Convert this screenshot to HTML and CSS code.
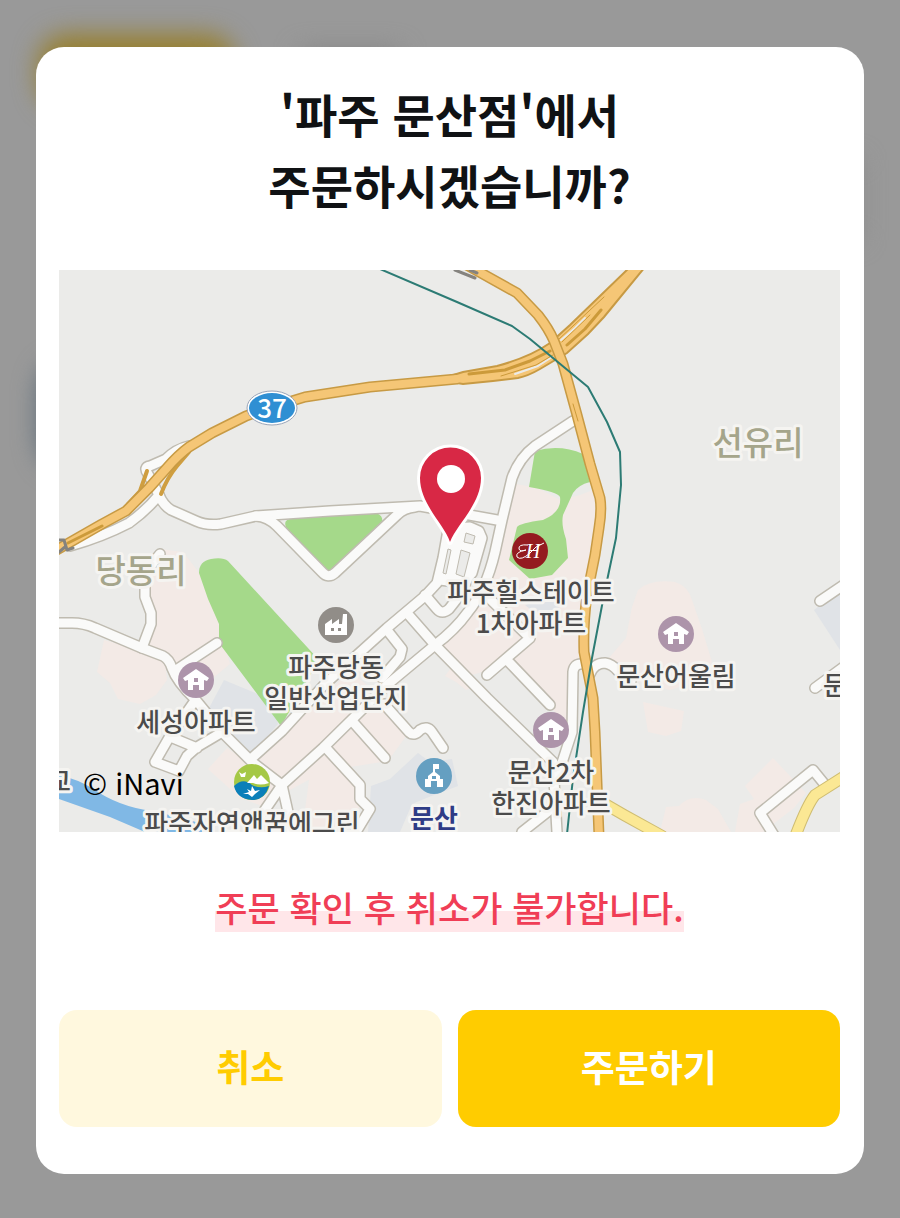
FILE: index.html
```html
<!DOCTYPE html>
<html lang="ko">
<head>
    <meta charset="UTF-8">
    <meta name="viewport" content="width=device-width, initial-scale=1.0">
    <title>주문 매장 확인</title>
    <link rel="stylesheet" href="styles.css">
</head>
<body>
    <div class="backdrop" aria-hidden="true">
        <div class="blob blob-yellow"></div>
        <div class="blob blob-gray"></div>
        <div class="blob blob-blue"></div>
        <div class="blob blob-side"></div>
    </div>

    <div class="overlay">
        <div class="modal" role="dialog" aria-modal="true" aria-labelledby="modalTitle">
            <h1 id="modalTitle" class="modal-title">'파주 문산점'에서<br>주문하시겠습니까?</h1>

            <svg class="map" viewBox="59 270 781 562" role="img" aria-label="파주 문산점 지도">
                <defs>
                    <g id="roads">
                        <!-- west -->
                        <path d="M70 546Q102 537 129 523Q147 510 159 495L148 474Q143 467 150 466L166 459Q176 449 189 446"/>
                        <path d="M159 495Q163 505 171 510L196 521Q207 526 221 524L256 516L330 511L420 506L497 520"/>
                        <path d="M256 516Q268 517 277 526L322 572Q328 579 335 573L397 515Q404 508 415 507"/>
                        <path d="M59 623H72Q84 623 95 628L142 648L163 656Q169 659 172 668Q177 682 195 699L222 732L252 762L282 785L288 812V832"/>
                        <path d="M282 785L260 817L250 832"/>
                        <path d="M160 554Q145 572 145 580V597L151 613V624L142 648"/>
                        <path d="M176 670L217 643"/>
                        <path d="M194 702L170 736L155 762L179 771L187 756L197 747L224 731M173 738L197 748"/>
                        <!-- centre -->
                        <path d="M573 421L535 446Q519 458 512 478L502 520L495 552Q486 590 468 612Q455 630 435 645L387 685L323 748L282 785"/>
                        <path d="M448 530L443 558L437 583L425 596L387 628L325 684L282 731L252 758"/>
                        <path d="M407 613L435 645L487 698L553 762L557 832"/>
                        <path d="M387 630L402 649L400 657L382 678"/>
                        <path d="M425 595L437 609Q442 615 449 609L460 595L468 578"/>
                        <path class="yard" d="M452 528L470 527L479 531L482 538L472 573L463 583L440 580L446 555Z"/>
                        <path d="M490 599L530 638L487 675M507 660L550 705"/>
                        <path d="M384 704L409 732Q414 737 420 730Q427 725 432 732L443 748"/>
                        <path d="M353 722L385 758"/>
                        <path d="M326 748L360 785V799L370 809L356 832"/>
                        <path d="M581 664Q574 664 573 672L572 732L558 775"/>
                        <path d="M590 674Q594 663 605 663Q612 664 618 671L631 681"/>
                        <path d="M555 806L522 832"/>
                        <!-- east -->
                        <path d="M820 601L845 584M815 688L845 666"/>
                        <path d="M775 837L760 813L813 770L826 786"/>
                    </g>
                    <path id="road37" d="M55 551L102 524L126 511L149 488L166 469Q178 455 189 447L212 433L246 416L272 407L305 397L370 387L457 379"/>
                    <path id="roadNorth" d="M465 264L517 293L538 315Q549 329 554 341L563 364L577 415L590 464L600 498Q602 510 599 528L595 555L587 595Q583 625 584 652L593 698L595 732L599 836"/>
                    <g id="lanes">
                        <path d="M605 804L624 815L662 836M845 776L815 795Q807 805 795 837"/>
                    </g>
                    <g id="home">
                        <circle class="home-dot" r="18"/>
                        <path class="glyph" fill-rule="evenodd" d="M0-11L13-2L11 1L8 0V10H3V5H-3V10H-8V0L-11 1L-13-2ZM-2-2V2H2V-2Z"/>
                    </g>
                </defs>

                <rect class="land" x="59" y="270" width="781" height="562"/>

                <!-- estates -->
                <g class="estate">
                    <path d="M160 549L183 552L201 575L219 622L226 650L230 664L212 679L180 690L168 658L147 648L151 622L145 590Z"/>
                    <path d="M104 640L140 650L165 661L167 680L156 695L140 704L118 699L110 683L97 672Z"/>
                    <path d="M516 484L538 488L560 500L580 495L593 490L601 512L584 652L572 665L570 728L530 685L505 665L472 675L441 646L480 605L498 558Z"/>
                    <path d="M450 649L480 685L466 690L456 682L445 676L453 665Z"/>
                    <path d="M276 731L300 719L350 671L385 700L407 735L388 761L325 771L290 790L258 758Z"/>
                    <path d="M310 773L340 766L366 801L335 832H302Z"/>
                    <path d="M227 748L252 765L277 790L262 806L240 798L208 769Z"/>
                    <path d="M638 590Q650 579 675 582Q688 586 692 600L702 629L712 662L701 680L670 690L628 679L608 659L626 638L632 607Z"/>
                    <path d="M643 702L684 711L681 731L666 736L648 732Z"/>
                    <path d="M773 758L806 793L794 808L763 832H735L740 804L754 799L745 786Z"/>
                    <path d="M666 807L679 806Q690 794 706 800L718 809L731 832H660Z"/>
                </g>
                <g class="campus">
                    <path d="M224 680L272 700L278 724L250 757L208 710Z"/>
                    <path d="M418 753L430 762L452 759L458 786L429 797L412 804L400 832H368L371 786L390 779Z"/>
                    <path d="M814 610L840 590V650Z"/>
                    <path d="M525 605L550 597L560 609L540 617Z"/>
                </g>
                <g class="park">
                    <path d="M199 573Q199 561 211 559Q223 557 228 561L319 660L281 726L219 643V624L208 599Z"/>
                    <path d="M290 519L372 512Q386 514 381 526L332 569Q328 572 324 568L286 528Q283 520 290 519Z"/>
                    <path d="M535 451Q560 444 583 454L590 482Q578 485 573 493L563 515Q561 525 566 539L568 558L552 575L530 579L509 560L517 527Q520 523 543 520Q562 512 560 497Q558 492 529 487Z"/>
                </g>
                <path class="river" d="M59 775Q78 779 95 790Q118 806 151 811Q181 817 202 824V832H145L110 817L59 799Z"/>

                <use class="road-edge" href="#roads"/>
                <use class="road" href="#roads"/>
                <path class="block" d="M466 533L475 536L473 544L464 542ZM461 550L470 553L464 577L456 574ZM448 549L443 573L446 574L451 550Z"/>
                <use class="lane-edge" href="#lanes"/>
                <use class="lane" href="#lanes"/>

                <!-- national road 37 and its junctions -->
                <path class="ramp" d="M147 471L140 491L128 504M161 494Q167 478 177 466L189 452"/>
                <use class="highway-edge" href="#road37"/>
                <path class="junction" d="M450 376L463 372L497 366Q530 357 550 343L570 325L630 267H645L604 317L588 334L567 353L540 369Q528 376 518 378L493 381L463 384L450 382Z"/>
                <use class="highway" href="#road37"/>
                <path class="junction-gap" d="M515 374L538 366L552 357M561 340L575 328L585 318"/>
                <path class="junction-line" d="M501 376L536 365L553 355M558 340L604 297M562 342L590 315"/>
                <path class="junction-line wide" d="M469 374L505 370L530 361L550 351M567 345L585 329L601 310M68 543L102 526"/>
                <use class="highway-edge" href="#roadNorth"/>
                <use class="highway" href="#roadNorth"/>
                <path class="junction-line" d="M573 404L578 421"/>
                <path class="tunnel" d="M59 540H64L67 550L73 548M59 552L65 547M455 270L475 278M470 270L477 273"/>
                <path class="rail" d="M380 269L457 302L512 326L530 339L588 387L607 422L620 452L621 485L616 538L604 595L592 658L583 712L573 778L567 834"/>

                <ellipse class="shield-edge" cx="272" cy="408" rx="25" ry="17"/>
                <ellipse class="shield" cx="272" cy="408" rx="23" ry="15"/>
                <text class="shield-text" x="272" y="418">37</text>

                <!-- places -->
                <text class="town" x="758" y="455">선유리</text>
                <text class="town" x="141" y="583">당동리</text>

                <circle class="brand-dot" cx="530" cy="551" r="18"/>
                <text class="brand-text" x="533" y="558">H</text>
                <path class="brand-line" d="M528 545Q518 544 519 549Q520 552 526 550Q515 552 517 557Q521 561 530 553Q535 546 544 543"/>
                <text class="place"><tspan x="531" y="602">파주힐스테이트</tspan><tspan x="531" y="633">1차아파트</tspan></text>

                <circle class="factory-dot" cx="336" cy="625" r="18"/>
                <path class="glyph" fill-rule="evenodd" d="M325 635V624L332 619V624L339 619V624H342L343 614H347V635ZM331 628V631H334V628ZM338 628V631H341V628Z"/>
                <text class="place"><tspan x="336" y="677">파주당동</tspan><tspan x="336" y="708">일반산업단지</tspan></text>

                <use href="#home" x="196" y="680"/>
                <text class="place" x="196" y="732">세성아파트</text>
                <use href="#home" x="676" y="634"/>
                <text class="place" x="676" y="686">문산어울림</text>
                <use href="#home" x="551" y="730"/>
                <text class="place"><tspan x="551" y="782">문산2차</tspan><tspan x="551" y="813">한진아파트</tspan></text>
                <text class="place start" x="823" y="695">문산</text>
                <text class="place end" x="71" y="791">교</text>

                <circle class="eco-dot" cx="252" cy="782" r="18"/>
                <path class="eco-sea" d="M234 786Q243 777 252 785Q260 789 269 786Q265 800 252 800Q237 799 234 786Z"/>
                <path class="glyph" d="M247 783L254 775L257 779L261 775L269 783Q260 786 253 783ZM239 772L242 774L246 772L245 777L241 777ZM247 789L251 791L252 786L255 791L260 790L255 794L252 797L248 794L243 794L249 792Z"/>
                <text class="place" x="252" y="833">파주자연앤꿈에그린</text>

                <circle class="school-dot" cx="434" cy="776" r="18"/>
                <path class="glyph" fill-rule="evenodd" d="M433 764H439V769H435V772L440 776V779H443V787H437V781H431V787H425V779H428V776L433 772ZM432 776V779H436V776Z"/>
                <text class="place school" x="434" y="828">문산</text>

                <!-- store pin -->
                <path class="pin" d="M450 542C444 524 420 504 420 478A30 30 0 0 1 481 478C481 504 457 524 450 542Z"/>
                <circle class="pin-hole" cx="451" cy="479" r="14"/>

                <text class="copyright" x="83" y="795">© iNavi</text>
            </svg>

            <p class="notice"><span class="notice-text">주문 확인 후 취소가 불가합니다.</span></p>

            <div class="actions">
                <button type="button" class="btn btn-cancel">취소</button>
                <button type="button" class="btn btn-order">주문하기</button>
            </div>
        </div>
    </div>
</body>
</html>
```

FILE: styles.css
```css
* {
    box-sizing: border-box;
}
body {
    margin: 0;
    min-height: 100vh;
    background-color: #999999;
    font-family: "Noto Sans CJK KR", "Noto Sans", sans-serif;
    color: #101214;
}

/* Blurred page behind the dialog */
.backdrop {
    position: fixed;
    inset: 0;
    overflow: hidden;
}
.blob {
    position: absolute;
    filter: blur(12px);
}
.blob-yellow {
    top: 34px;
    left: 38px;
    width: 198px;
    height: 76px;
    border-radius: 30px;
    background-color: #978030;
}
.blob-gray {
    top: 50px;
    left: 300px;
    width: 100px;
    height: 40px;
    background-color: #858585;
}
.blob-blue {
    top: 360px;
    left: 38px;
    width: 60px;
    height: 110px;
    border-radius: 30px;
    background-color: #5c6c7a;
}
.blob-side {
    top: 160px;
    right: 40px;
    width: 30px;
    height: 80px;
    background-color: #8c8c8c;
}

/* Dialog */
.overlay {
    position: relative;
    padding: 47px 36px 44px;
}
.modal {
    padding: 31px 24px 47px 23px;
    border-radius: 28px;
    background-color: #ffffff;
    text-align: center;
}
.modal-title {
    margin: 0 0 50px;
    font-size: 46px;
    font-weight: 700;
    line-height: 71px;
}
.notice {
    margin: 50px 0 78px;
    font-size: 35px;
    font-weight: 500;
    line-height: 50px;
    color: #f03e56;
}
.notice-text {
    display: inline-block;
    background: linear-gradient(transparent 58%, #ffe6e9 58%);
}
.actions {
    display: flex;
    gap: 16px;
}
.btn {
    flex: 1;
    padding: 28px 0 32px;
    border: none;
    border-radius: 18px;
    font-family: inherit;
    font-size: 37px;
    font-weight: 700;
    line-height: 57px;
    cursor: pointer;
}
.btn-cancel {
    background-color: #fff8de;
    color: #ffcc00;
}
.btn-order {
    background-color: #ffcc00;
    color: #ffffff;
}

/* Map */
.map {
    display: block;
    width: 100%;
    height: auto;
    overflow: hidden;
}
.land { fill: #ebebe9; }
.estate { fill: #f3eae6; }
.campus { fill: #e0e3e7; }
.park { fill: #a5d98a; }
.river { fill: #80b8e5; }
.road-edge, .road, .lane-edge, .lane, .highway-edge, .highway, .ramp, .rail, .tunnel, .junction-line, .junction-gap {
    fill: none;
    stroke-linecap: round;
    stroke-linejoin: round;
}
.road-edge {
    stroke: #bfbbb0;
    stroke-width: 12px;
}
.road {
    stroke: #fafaf9;
    stroke-width: 9px;
}
.yard { fill: #fafaf9; }
.block {
    fill: #ebebe9;
    stroke: #bfbbb0;
    stroke-width: 1px;
}
.lane-edge {
    stroke: #cfbd72;
    stroke-width: 12px;
}
.lane {
    stroke: #fbe894;
    stroke-width: 10px;
}
.highway-edge {
    stroke: #c79a44;
    stroke-width: 11px;
}
.highway {
    stroke: #f5c676;
    stroke-width: 8px;
}
.ramp {
    stroke: #cf9e40;
    stroke-width: 4px;
}
.junction {
    fill: #f5c676;
    stroke: #c79a44;
    stroke-width: 2px;
}
.junction-line {
    stroke: #cc9a3a;
    stroke-width: 1px;
}
.junction-line.wide {
    stroke-width: 3px;
}
.junction-gap {
    stroke: #ebebe9;
    stroke-width: 2px;
}
.tunnel {
    stroke: #85837f;
    stroke-width: 3px;
}
.rail {
    stroke: #2c7b74;
    stroke-width: 2px;
}
.shield-edge {
    fill: #ffffff;
    stroke: #9aa5b8;
    stroke-width: 1px;
}
.shield { fill: #2f8fd3; }
.shield-text {
    fill: #ffffff;
    font-size: 26px;
    font-weight: 500;
    text-anchor: middle;
}
.town, .place {
    stroke: #f5f4f1;
    stroke-width: 6px;
    stroke-linejoin: round;
    paint-order: stroke;
    text-anchor: middle;
    font-weight: 500;
}
.town {
    fill: #a5a58b;
    font-size: 33px;
}
.place {
    fill: #4b4b4b;
    font-size: 26px;
}
.place.start { text-anchor: start; }
.place.end { text-anchor: end; }
.place.school {
    fill: #2f3c86;
    font-weight: 700;
}
.glyph { fill: #ffffff; }
.home-dot { fill: #ad94aa; }
.factory-dot { fill: #918d88; }
.school-dot { fill: #659fc1; }
.brand-dot { fill: #941b20; }
.brand-text {
    fill: #ffffff;
    font-family: "Liberation Serif", serif;
    font-size: 20px;
    font-style: italic;
    text-anchor: middle;
}
.brand-line {
    fill: none;
    stroke: #ffffff;
    stroke-width: 1px;
}
.eco-dot { fill: #a5c846; }
.eco-sea { fill: #0b7fb9; }
.pin {
    fill: #d82845;
    stroke: #ffffff;
    stroke-width: 6px;
    stroke-linejoin: round;
    paint-order: stroke;
}
.pin-hole { fill: #ffffff; }
.copyright {
    fill: #000000;
    font-size: 29px;
}
```
